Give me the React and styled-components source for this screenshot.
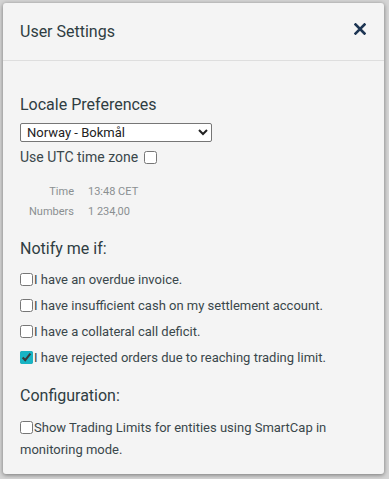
import React, { useState } from "react";
import styled, { createGlobalStyle } from "styled-components";

const GlobalStyle = createGlobalStyle`
  html, body {
    margin: 0;
    padding: 0;
    background: #d4d4d4;
  }
  body {
    font-family: Roboto, "Liberation Sans", sans-serif;
  }
`;

const Page = styled.div`
  padding: 3px 5px 5px 3px;
  height: 479px;
  box-sizing: border-box;
`;

const Modal = styled.div`
  background: #f4f4f4;
  border-radius: 3px;
  box-shadow: 0 1px 4px rgba(0, 0, 0, 0.45);
  height: 471px;
  box-sizing: border-box;
  display: flex;
  flex-direction: column;
  color: #2c3b40;
`;

const Header = styled.div`
  display: flex;
  align-items: center;
  justify-content: space-between;
  height: 57px;
  padding: 0 18px 0 17px;
  border-bottom: 1px solid #dedede;
`;

const Title = styled.div`
  font-size: 16px;
  color: #2f3d42;
`;

const CloseButton = styled.button`
  border: none;
  background: none;
  padding: 0;
  cursor: pointer;
  display: flex;
  margin-top: -5px;
`;

const Body = styled.div`
  padding: 34px 17px 0 17px;
`;

const SectionTitle = styled.div`
  font-size: 16px;
  line-height: 20px;
  margin-bottom: ${(p) => p.$gap || 8}px;
  color: #2f3d42;
`;

const Select = styled.select`
  font-family: Roboto, "Liberation Sans", sans-serif;
  font-size: 13px;
  font-weight: 400;
  width: 192px;
  height: 19px;
  padding: 0 0 0 2px;
  border: 1px solid #767676;
  border-radius: 2px;
  background: #fff;
  color: #222;
  display: block;
`;

const UtcRow = styled.label`
  display: flex;
  align-items: center;
  font-size: 14px;
  margin-top: 7px;
  color: #3a474b;
`;

const Box = styled.input`
  accent-color: #18b4c4;
  margin: 0 ${(p) => p.$right || 1}px 0 ${(p) => p.$left || 0}px;
  width: 13px;
  height: 13px;
  flex-shrink: 0;
`;

const InfoGrid = styled.div`
  display: grid;
  grid-template-columns: 54px auto;
  column-gap: 14px;
  row-gap: 7px;
  font-size: 11px;
  color: #8a8f91;
  margin: 20px 0 21px 0;
  justify-content: start;
`;

const InfoLabel = styled.span`
  text-align: right;
`;

const CheckList = styled.div`
  display: flex;
  flex-direction: column;
  gap: 9px;
  margin-bottom: 20px;
`;

const CheckRow = styled.label`
  display: flex;
  align-items: flex-start;
  font-size: 13px;
  line-height: 17px;
  color: #3a474b;
  & > input {
    margin-top: 2px;
  }
`;

const WrapRow = styled.label`
  display: block;
  font-size: 13px;
  line-height: 22px;
  color: #3a474b;
  & > input {
    vertical-align: -2px;
  }
`;

const notifyItems = [
  { id: "overdue", label: "I have an overdue invoice.", checked: false },
  { id: "cash", label: "I have insufficient cash on my settlement account.", checked: false },
  { id: "collateral", label: "I have a collateral call deficit.", checked: false },
  { id: "rejected", label: "I have rejected orders due to reaching trading limit.", checked: true },
];

const App = () => {
  const [notify, setNotify] = useState(
    Object.fromEntries(notifyItems.map((n) => [n.id, n.checked]))
  );

  return (
    <>
      <GlobalStyle />
      <Page>
        <Modal>
          <Header>
            <Title>User Settings</Title>
            <CloseButton aria-label="Close">
              <svg width="12" height="12" viewBox="0 0 12 12">
                <path
                  d="M1.5 1.5 L10.5 10.5 M10.5 1.5 L1.5 10.5"
                  stroke="#1d3553"
                  strokeWidth="2.6"
                  strokeLinecap="square"
                />
              </svg>
            </CloseButton>
          </Header>
          <Body>
            <SectionTitle $gap={8}>Locale Preferences</SectionTitle>
            <Select defaultValue="nb">
              <option value="nb">Norway - Bokmål</option>
              <option value="en">English</option>
            </Select>
            <UtcRow>
              Use UTC time zone
              <Box type="checkbox" $left={6} />
            </UtcRow>
            <InfoGrid>
              <InfoLabel>Time</InfoLabel>
              <span>13:48 CET</span>
              <InfoLabel>Numbers</InfoLabel>
              <span>1 234,00</span>
            </InfoGrid>

            <SectionTitle $gap={12}>Notify me if:</SectionTitle>
            <CheckList>
              {notifyItems.map((item) => (
                <CheckRow key={item.id}>
                  <Box
                    type="checkbox"
                    checked={notify[item.id]}
                    onChange={(e) =>
                      setNotify({ ...notify, [item.id]: e.target.checked })
                    }
                  />
                  {item.label}
                </CheckRow>
              ))}
            </CheckList>

            <SectionTitle $gap={11}>Configuration:</SectionTitle>
            <WrapRow>
              <Box type="checkbox" />
              Show Trading Limits for entities using SmartCap in monitoring mode.
            </WrapRow>
          </Body>
        </Modal>
      </Page>
    </>
  );
};

export default App;
